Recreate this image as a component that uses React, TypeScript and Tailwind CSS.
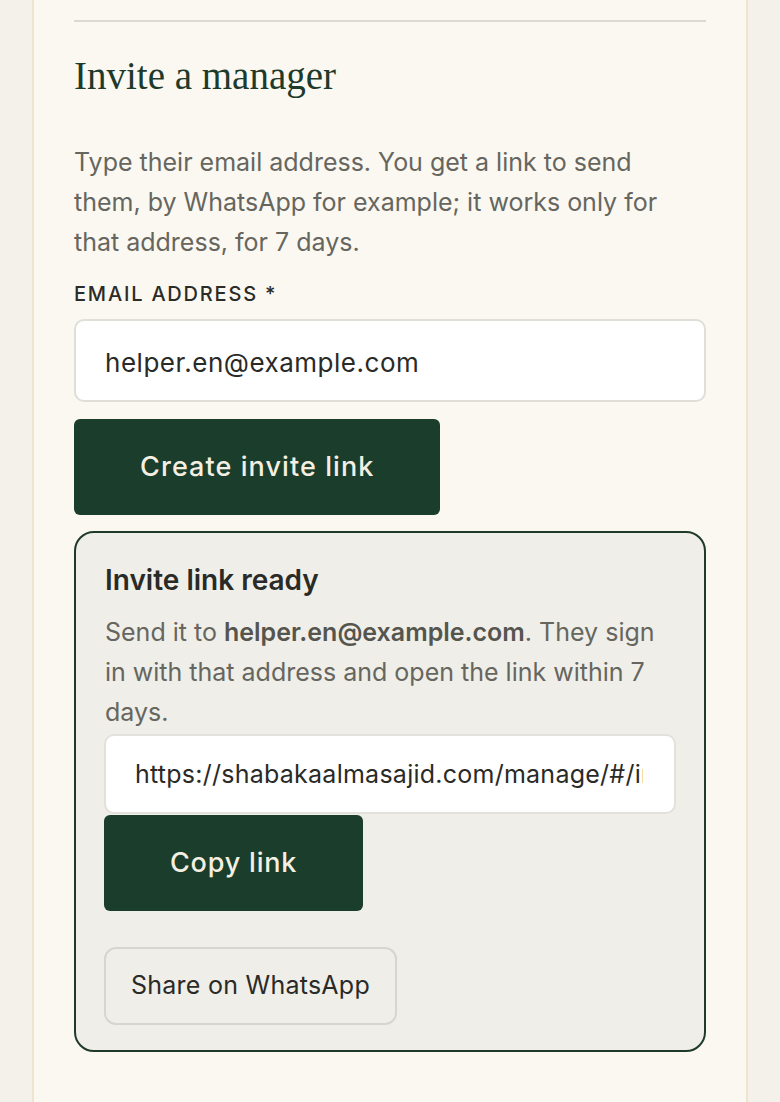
import React from 'react';

const sans = "font-['Inter','Noto_Sans',sans-serif]";

export default function App() {
  const email = 'helper.en@example.com';
  const link = 'https://shabakaalmasajid.com/manage/#/invite/7f3c9a2e';

  return (
    <div className={`min-h-[1102px] bg-[#f4f0ea] px-[32px] ${sans}`}>
      {/* Card */}
      <div className="min-h-[1102px] border-x-2 border-[#efe4d0] bg-[#fbf8f2] px-[40px]">
        <div className="pt-[20px]">
          <hr className="border-t-2 border-[#dcd9d2]" />
        </div>

        <h2 className="mt-[30px] font-['Liberation_Serif',serif] text-[39px] leading-[48px] text-[#1d3a2b]">
          Invite a manager
        </h2>

        <p className="mt-[42px] max-w-[610px] text-[25px] leading-[40px] text-[#66665e]">
          Type their email address. You get a link to send them, by WhatsApp for example; it works only for
          that address, for 7 days.
        </p>

        <label className="mt-[18px] block text-[20px] font-medium uppercase leading-[28px] tracking-[0.09em] text-[#2b2b27]">
          Email address *
        </label>

        <input
          type="email"
          defaultValue={email}
          className="mt-[11px] block h-[83px] w-full rounded-[10px] border-2 border-[#e0ded8] bg-white px-[29px] pt-[3px] text-[26px] tracking-[0.02em] text-[#2a2a27] outline-none"
        />

        <button className="mt-[17px] h-[96px] rounded-[6px] bg-[#1b3d2c] px-[66px] text-[27px] font-medium tracking-[0.04em] text-[#f3efe2]">
          Create invite link
        </button>

        {/* Result box */}
        <div className="mt-[16px] rounded-[20px] border-2 border-[#1f3a2b] bg-[#efeee9] px-[28px] pt-[29px] pb-[25px]">
          <h3 className="pl-px text-[28px] font-semibold leading-[36px] text-[#2a2a27]">Invite link ready</h3>
          <p className="mt-[14px] pl-px text-[25px] leading-[40px] text-[#66665e]">
            Send it to <strong className="font-semibold text-[#55554e]">{email}</strong>. They sign in with that
            address and open the link within 7 days.
          </p>
          <input
            readOnly
            value={link}
            className="mt-[2px] block h-[80px] w-full rounded-[10px] border-2 border-[#e3e1db] bg-white pl-[29px] pr-[31px] text-[25px] tracking-[0.01em] text-[#2a2a27] outline-none"
          />
          <button className="mt-[1px] h-[96px] rounded-[6px] bg-[#1b3d2c] px-[66px] text-[27px] font-medium tracking-[0.03em] text-[#f3efe2]">
            Copy link
          </button>
          <div className="mt-[36px]">
            <button className="h-[78px] rounded-[12px] border-2 border-[#d7d5cf] px-[25px] text-[25px] tracking-[0.01em] text-[#2a2a27]">
              Share on WhatsApp
            </button>
          </div>
        </div>
      </div>
    </div>
  );
}
